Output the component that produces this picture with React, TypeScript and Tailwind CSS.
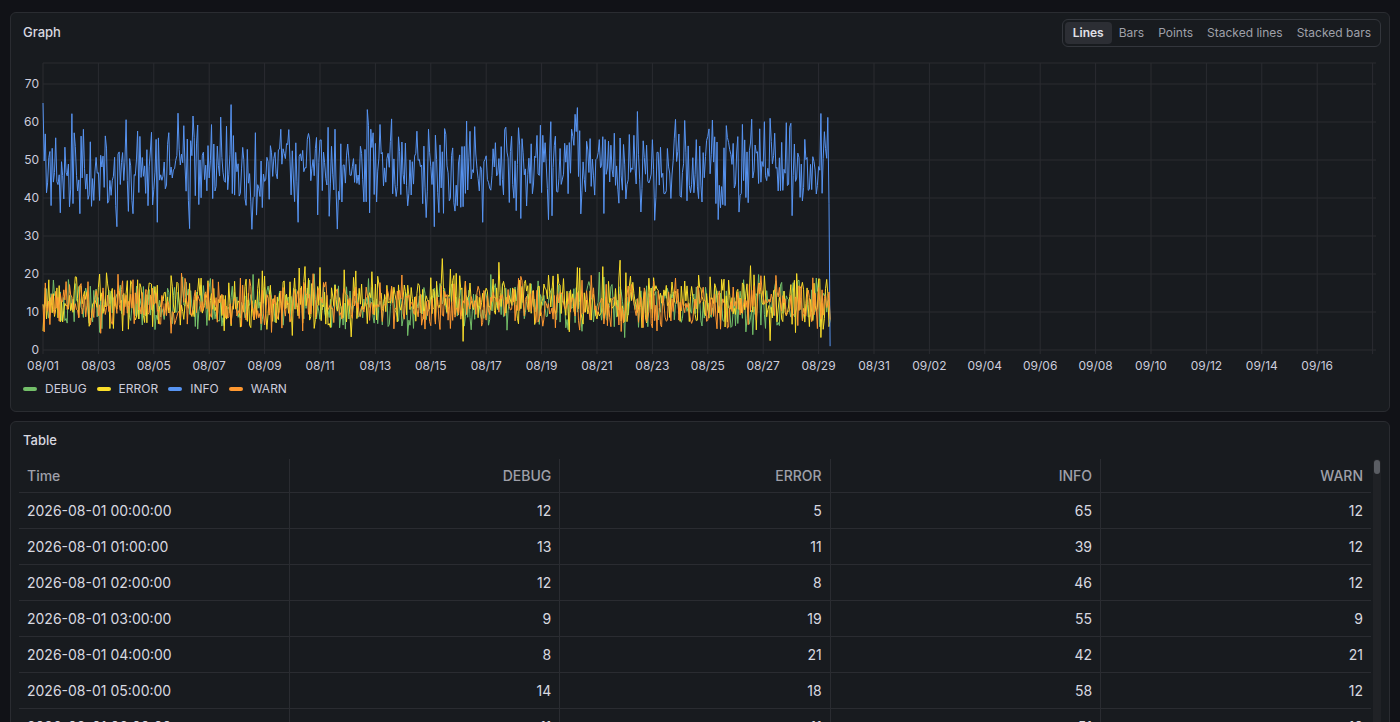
import { useMemo } from 'react'

const SERIES = [
  { key: 'DEBUG', color: '#73bf69', base: 12, amp: 5 },
  { key: 'ERROR', color: '#fade2a', base: 13, amp: 6 },
  { key: 'INFO', color: '#5794f2', base: 48, amp: 10 },
  { key: 'WARN', color: '#ff9830', base: 12, amp: 5 },
]

const ROWS = [
  ['2026-08-01 00:00:00', 12, 5, 65, 12],
  ['2026-08-01 01:00:00', 13, 11, 39, 12],
  ['2026-08-01 02:00:00', 12, 8, 46, 12],
  ['2026-08-01 03:00:00', 9, 19, 55, 9],
  ['2026-08-01 04:00:00', 8, 21, 42, 21],
  ['2026-08-01 05:00:00', 14, 18, 58, 12],
  ['2026-08-01 06:00:00', 11, 11, 51, 10],
]

const X_LABELS = [
  '08/01', '08/03', '08/05', '08/07', '08/09', '08/11', '08/13', '08/15', '08/17', '08/19', '08/21', '08/23',
  '08/25', '08/27', '08/29', '08/31', '09/02', '09/04', '09/06', '09/08', '09/10', '09/12', '09/14', '09/16',
]

// plot geometry (svg coords)
const X0 = 32
const DAY = 27.7
const Y0 = 297
const UNIT = 3.8
const POINTS = 683

function rng(seed: number) {
  let s = seed
  return () => {
    s = (s * 1103515245 + 12345) % 2147483648
    return s / 2147483648
  }
}

const Graph = () => {
  const paths = useMemo(
    () =>
      SERIES.map((s, i) => {
        const r = rng(17 + i * 101)
        let d = ''
        for (let p = 0; p < POINTS; p++) {
          let v = s.base + (r() + r() + r() - 1.5) * s.amp * 1.3
          if (p === POINTS - 1) v = s.key === 'INFO' ? 1 : 8
          if (p === 0) v = [12, 5, 65, 12][i]
          const x = X0 + (p / 24) * DAY
          const y = Y0 - Math.max(0, v) * UNIT
          d += `${p ? 'L' : 'M'}${x.toFixed(1)},${y.toFixed(1)}`
        }
        return { d, color: s.color }
      }),
    []
  )

  return (
    <svg width={1380} height={322} className="block">
      {Array.from({ length: 8 }).map((_, i) => (
        <line key={i} x1={X0} x2={1365} y1={Y0 - i * 38} y2={Y0 - i * 38} stroke="#2a2c31" />
      ))}
      <line x1={X0} x2={1365} y1={10} y2={10} stroke="#2a2c31" />
      {Array.from({ length: 25 }).map((_, i) => (
        <line key={i} x1={X0 + i * 2 * DAY} x2={X0 + i * 2 * DAY} y1={10} y2={Y0 + 4} stroke="#2a2c31" />
      ))}
      {Array.from({ length: 8 }).map((_, i) => (
        <text key={i} x={28} y={Y0 - i * 38 + 4} textAnchor="end" fontSize={12} fill="#ccccdc">
          {i * 10}
        </text>
      ))}
      {X_LABELS.map((l, i) => (
        <text key={l} x={X0 + i * 2 * DAY} y={Y0 + 20} textAnchor="middle" fontSize={12} fill="#ccccdc">
          {l}
        </text>
      ))}
      {paths.map((p, i) => (
        <path key={i} d={p.d} fill="none" stroke={p.color} strokeWidth={1} strokeLinejoin="round" />
      ))}
    </svg>
  )
}

const App = () => {
  return (
    <div
      className="h-[722px] overflow-hidden bg-[#111217] px-[10px] pt-3 text-[#ccccdc]"
      style={{ fontFamily: 'Inter, "Noto Sans", sans-serif' }}
    >
      <div className="h-[400px] rounded-md border border-[#2a2c31] bg-[#181b1f]">
        <div className="flex h-10 items-center justify-between pl-3 pr-2">
          <h2 className="text-[13px] font-medium text-[#d8d9e0]">Graph</h2>
          <div className="flex items-center rounded-md border border-[#33363c] p-[2px] text-[12px] text-[#9fa0a9]">
            <span className="rounded bg-[#2c2e34] px-[8px] py-[2px] font-semibold text-[#e0e0e8]">Lines</span>
            <span className="px-[7px] py-[2px]">Bars</span>
            <span className="px-[7px] py-[2px]">Points</span>
            <span className="px-[7px] py-[2px]">Stacked lines</span>
            <span className="px-[7px] py-[2px]">Stacked bars</span>
          </div>
        </div>
        <Graph />
        <div className="mt-[5px] flex gap-[10px] pl-3 text-[12px] text-[#ccccdc]">
          {SERIES.map((s) => (
            <div key={s.key} className="flex items-center gap-2">
              <span className="h-[4px] w-[14px] rounded-full" style={{ background: s.color }} />
              {s.key}
            </div>
          ))}
        </div>
      </div>

      <div className="mt-[9px] h-[400px] rounded-md border border-[#2a2c31] bg-[#181b1f]">
        <h2 className="pl-3 pt-[9px] pb-[8px] text-[13px] font-medium text-[#d8d9e0]">Table</h2>
        <div className="relative mx-2 mr-[18px]">
          <table className="w-full table-fixed border-collapse text-[14px]">
            <thead>
              <tr className="h-[34px] border-b border-[#2a2c31] text-[#9fa0a9]">
                <th className="px-2 text-left font-medium">Time</th>
                {['DEBUG', 'ERROR', 'INFO', 'WARN'].map((h, i) => (
                  <th key={h} className={`px-2 text-right font-medium ${i < 3 ? 'border-r' : ''} border-l border-[#2a2c31]`}>
                    {h}
                  </th>
                ))}
              </tr>
            </thead>
            <tbody>
              {ROWS.map((r) => (
                <tr key={r[0]} className="h-[36px] border-b border-[#2a2c31] text-[#d8d9e0]">
                  {r.map((c, i) => (
                    <td key={i} className={`px-2 ${i ? 'text-right border-l border-[#2a2c31]' : 'text-left'}`}>
                      {c}
                    </td>
                  ))}
                </tr>
              ))}
            </tbody>
          </table>
          <div className="absolute right-[-10px] top-0 h-[300px] w-[8px] rounded bg-[#202226]">
            <div className="mx-auto mt-[1px] h-[14px] w-[6px] rounded bg-[#5a5d63]" />
          </div>
        </div>
      </div>
    </div>
  )
}

export default App
